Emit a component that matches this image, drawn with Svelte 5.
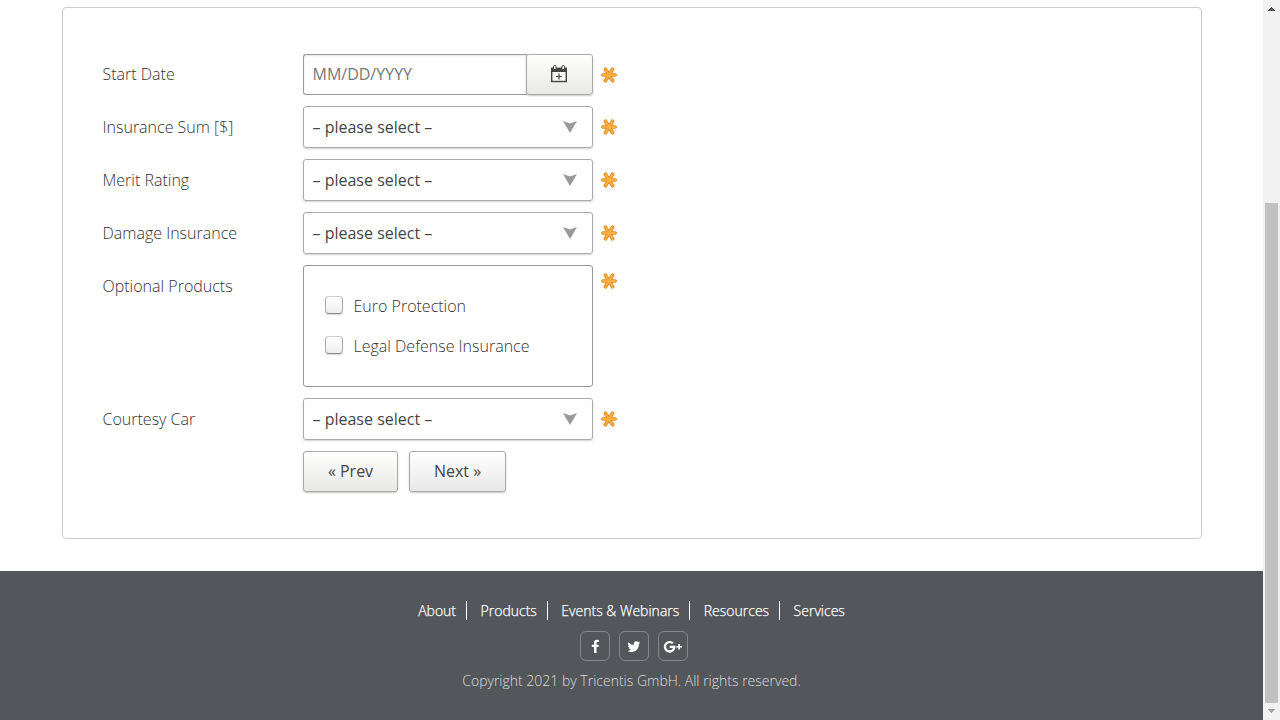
<script>
  const before = ['Insurance Sum [$]', 'Merit Rating', 'Damage Insurance'];
  const products = ['Euro Protection', 'Legal Defense Insurance'];
  const links = ['About', 'Products', 'Events & Webinars', 'Resources', 'Services'];
</script>

{#snippet star()}
  <svg class="star" width="16" height="16" viewBox="0 0 16 16">
    <g fill="none" stroke-linecap="round">
      <path d="M1.8 8H14.2M4.4 2.2L11.6 13.8M11.6 2.2L4.4 13.8" stroke="#e08a24" stroke-width="3.6" />
      <path d="M1.8 8H14.2M4.4 2.2L11.6 13.8M11.6 2.2L4.4 13.8" stroke="#ffb03c" stroke-width="2" />
    </g>
  </svg>
{/snippet}

{#snippet selectRow(label)}
  <div class="row">
    <div class="label">{label}</div>
    <div class="field select">
      <span>– please select –</span>
      <svg width="14" height="12" viewBox="0 0 14 12"><path d="M0 0L7 2.5L14 0L7 12Z" fill="#999" /></svg>
    </div>
    {@render star()}
  </div>
{/snippet}

<div class="page">
  <div class="content">
    <main>
      <div class="row start">
        <div class="label">Start Date</div>
        <div class="date">
          <input type="text" placeholder="MM/DD/YYYY" aria-label="Start Date" />
          <button class="btn cal" aria-label="Open calendar">
            <svg width="18" height="18" viewBox="0 0 18 18">
              <path d="M1 2.6H17V17.2H1Z" fill="#444" />
              <path d="M2.4 7H15.6V15.8H2.4Z" fill="#f8f8f7" />
              <path d="M3.5 4.5V1.8Q3.5 .5 4.8 .5T6.1 1.8V4.5ZM11.9 4.5V1.8Q11.9 .5 13.2 .5T14.5 1.8V4.5Z" fill="#f8f8f7" stroke="#444" />
              <path d="M9 8.5V14.5M6 11.5H12" stroke="#444" stroke-width="1.2" />
            </svg>
          </button>
        </div>
        {@render star()}
      </div>
      {#each before as label}
        {@render selectRow(label)}
      {/each}
      <div class="row products">
        <div class="label">Optional Products</div>
        <div class="field group">
          {#each products as p}
            <div class="option"><span class="box"></span>{p}</div>
          {/each}
        </div>
        {@render star()}
      </div>
      {@render selectRow('Courtesy Car')}
      <div class="actions">
        <button class="btn prev">« Prev</button>
        <button class="btn next">Next »</button>
      </div>
    </main>
    <footer>
      <nav>
        {#each links as l}<a href="#top">{l}</a>{/each}
      </nav>
      <div class="social">
        <span><svg width="20" height="20" viewBox="0 0 20 20"><path d="M13.9 3.9V6.1H12.6Q11.5 6.1 11.5 7.1V8.7H13.8L13.5 11.1H11.5V16.9H9V11.1H6.8V8.7H9V6.8Q9 3.7 12 3.7Q13.3 3.7 13.9 3.9Z" /></svg></span>
        <span><svg width="20" height="20" viewBox="0 0 20 20"><path d="M16.2 5.5Q15.7 6.3 14.9 6.9C15.2 12.3 11.2 15.1 7.6 15.1Q5.3 15.1 3.5 14Q5.7 14.1 7.3 12.9Q5.4 12.7 4.8 11.1H6Q3.9 10.4 3.9 8.5L5.1 8.8Q3.2 7.3 4.3 5.3Q6.5 7.9 9.8 8Q9.2 5.5 11.2 4.6Q12.9 4 14.2 5.2L15.9 4.6Q15.6 5.5 14.8 6Z" transform="translate(0 .9)" /></svg></span>
        <span><svg width="20" height="20" viewBox="0 0 20 20"><path d="M10.7 6.5Q9.2 4.9 6.8 4.9A5.9 5.9 0 1 0 12.5 9.8H6.8V12H10Q9.3 14.3 6.9 14.3A3.6 3.6 0 1 1 9.1 8.1Z" /><path d="M15.3 8H17V9.9H19V11.6H17V13.5H15.3V11.6H13.4V9.9H15.3Z" /></svg></span>
      </div>
      <div class="copy">Copyright 2021 by Tricentis GmbH. All rights reserved.</div>
    </footer>
  </div>
  <div class="scrollbar">
    <svg width="17" height="17" viewBox="0 0 17 17" shape-rendering="crispEdges"><path d="M5 11V10H6V9H7V8H8V7H9V8H10V9H11V10H12V11Z" fill="#505050" /></svg>
    <div class="thumb"></div>
    <svg width="17" height="17" viewBox="0 0 17 17" shape-rendering="crispEdges"><path d="M5 6V7H6V8H7V9H8V10H9V9H10V8H11V7H12V6Z" fill="#a3a3a3" /></svg>
  </div>
</div>

<style>
  :global(body) { margin: 0; overflow: hidden; }
  .page, .page * { box-sizing: border-box; }
  .page {
    display: flex;
    width: 1280px;
    height: 720px;
    overflow: hidden;
    background: #fff;
    color: #333;
    font: 300 16px/24px "Open Sans", sans-serif;
  }
  .content { width: 1263px; display: flex; flex-direction: column; }
  main {
    width: 1140px;
    height: 532px;
    margin: 7px 0 32px 62px;
    padding: 46px 0 0 39.5px;
    border: 1px solid #ccc;
    border-radius: 4px;
    display: flex;
    flex-direction: column;
    gap: 11px;
  }
  .row { display: flex; align-items: center; height: 42px; flex: none; }
  .start { height: 41px; }
  .start .label { padding-bottom: 1px; }
  .label { width: 200.5px; }
  .field, .date { width: 290px; height: 100%; }
  .field, input, .btn { border: 1px solid #aaa; border-radius: 3px; }
  .select {
    display: flex;
    align-items: center;
    justify-content: space-between;
    padding: 0 15px 0 8.5px;
    color: #444;
    font-weight: 400;
    box-shadow: 0 1px 2px rgba(0, 0, 0, .18);
  }
  .star { margin: 0 0 0 8px; flex: none; }
  .date { display: flex; }
  input {
    width: 224px;
    height: 41px;
    padding: 0 9px 1px 8.5px;
    border-color: #999;
    border-right: 0;
    border-radius: 3px 0 0 3px;
    font: 400 16px "Open Sans", sans-serif;
    box-shadow: inset 0 1px 2px rgba(0, 0, 0, .1);
  }
  input::placeholder { color: #777; opacity: 1; }
  .btn {
    height: 41px;
    padding: 0 0 2px;
    color: #444;
    font: 400 16px/22px "Open Sans", sans-serif;
    background: linear-gradient(#fff, #e8e9e5);
    box-shadow: 0 1px 2px rgba(0, 0, 0, .22);
  }
  .cal { width: 67px; margin-left: -1px; padding-right: 2px; display: flex; align-items: center; justify-content: center; }
  .products { height: 122px; align-items: flex-start; }
  .products .label { padding-top: 9px; }
  .products .star { margin-top: 8px; }
  .group { border-color: #999; padding: 20px 0 0 21px; }
  .option { display: flex; align-items: center; height: 40px; gap: 10.5px; }
  .box {
    width: 18px;
    height: 18px;
    margin-top: -2px;
    border: 1px solid #aaa;
    border-top-color: #ccc;
    border-bottom-color: #888;
    border-radius: 4px;
    background: linear-gradient(#fff, #eee);
    box-shadow: 0 1px 1px rgba(0, 0, 0, .15);
  }
  .actions { display: flex; gap: 11px; padding-left: 200.5px; }
  .prev { width: 95px; }
  .next { width: 97px; background: linear-gradient(#fff, #e8e8e8); }
  footer {
    height: 149px;
    padding-top: 30px;
    background: #53575b;
    color: #fff;
    display: flex;
    flex-direction: column;
    align-items: center;
    font-size: 14px;
    line-height: 19px;
  }
  nav { display: flex; }
  nav a {
    color: #fff;
    text-decoration: none;
    padding-right: 10px;
    margin-right: 13.5px;
    border-right: 1px solid #fff;
    -webkit-text-stroke: .25px #fff;
  }
  nav a:last-child { border: 0; margin: 0; padding: 0; }
  .social { display: flex; gap: 9px; margin: 11px 0 10px 5px; }
  .social span {
    width: 30px;
    height: 30px;
    border: 1px solid #85878b;
    border-radius: 6px;
    display: flex;
    align-items: center;
    justify-content: center;
  }
  .social svg { fill: #fff; }
  .copy { color: #ddd; }
  .scrollbar { width: 17px; background: #f1f1f1; display: flex; flex-direction: column; }
  .scrollbar svg { flex: none; display: block; }
  .thumb { height: 500px; margin: 186px 2px 0; flex: none; background: #c1c1c1; }
</style>
